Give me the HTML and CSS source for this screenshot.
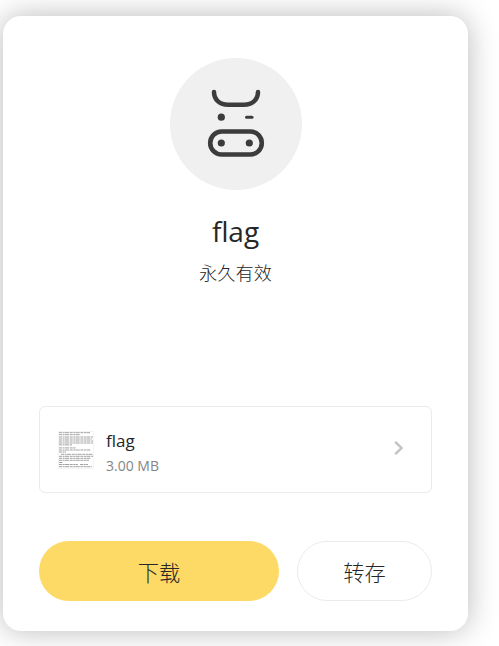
FILE: index.html
```html
<!DOCTYPE html>
<html lang="zh-CN">
<head>
<meta charset="utf-8">
<title>flag</title>
<link rel="stylesheet" href="styles.css">
</head>
<body>
<main class="card">
  <svg class="avatar" viewBox="0 0 132 132" fill="none" stroke="#3c3c3c" stroke-linecap="round">
    <circle cx="66" cy="66" r="66" fill="#f0f0f0" stroke="none"/>
    <path d="M44 34c0 8 6 12.7 14 12.7h16c8 0 14-4.700 14-12.700" stroke-width="4.500"/>
    <rect x="40.200" y="73.500" width="51.600" height="23" rx="11.500" stroke-width="4.600"/>
    <path d="M76.500 59.200h5.500" stroke-width="3"/>
    <g fill="#3c3c3c" stroke="none">
      <circle cx="51.300" cy="59.200" r="3.600"/>
      <circle cx="51.300" cy="85" r="3.600"/>
      <circle cx="79.300" cy="85" r="3.600"/>
    </g>
  </svg>
  <h1 class="title">flag</h1>
  <p class="validity">永久有效</p>
  <section class="file">
    <svg class="thumb" viewBox="0 0 36 38" fill="none" stroke="#8a8a8a" stroke-width=".8">
      <path stroke="#f1f1f1" d="M.5.500h35v37H.5z"/>
      <path stroke-dasharray="3 .6 2 .4 4 .7" d="M1 1.700h31M1 3.700h21M1 6h34M1 8h33M1 10h34M1 12h34M1 13.900h13M1 16.900h17M1 19h32M1 21h7M3 23.300h32M1 25.300h34M1 27.300h32M1 29.300h30M1 31.500h4M1 33.500h19M22 33.500h8M1 35.700h33"/>
    </svg>
    <div class="info">
      <div class="name">flag</div>
      <div class="size">3.00 MB</div>
    </div>
    <svg class="arrow" viewBox="0 0 10 16" fill="none" stroke="#c2c2c2" stroke-width="2.400"><path d="M1.200 1.800 7.500 8l-6.300 6.200"/></svg>
  </section>
  <div class="actions">
    <button class="btn primary">下载</button>
    <button class="btn secondary">转存</button>
  </div>
</main>
</body>
</html>
```
FILE: styles.css
```css
* { box-sizing: border-box; }
body {
  margin: 0;
  height: 646px;
  overflow: hidden;
  padding: 16.4px 0 0 3px;
  background: #fff;
  color: #262626;
  font-family: "Open Sans", "Noto Sans CJK SC", sans-serif;
}
.card {
  width: 465px;
  height: 615px;
  padding: 42px 36px 30px;
  border-radius: 18px;
  background: #fff;
  box-shadow: 0 0 30px rgba(0, 0, 0, .28);
  display: flex;
  flex-direction: column;
}
.avatar { width: 132px; height: 132px; margin-left: 131px; flex: none; }
.title {
  margin: 21px 0 0;
  font-size: 28px;
  line-height: 40px;
  font-weight: 400;
  text-align: center;
}
.validity {
  margin: 8.6px 0 0;
  font-size: 18.2px;
  line-height: 26px;
  font-weight: 300;
  text-align: center;
}
.file {
  margin-top: 120.4px;
  height: 87px;
  flex: none;
  border: 1px solid #ebebeb;
  border-radius: 6px;
  padding: 0 27px 0 18px;
  display: flex;
  align-items: center;
}
.thumb { width: 36px; height: 38px; flex: none; }
.info { margin: 8px 0 0 12px; flex: 1; }
.name { font-size: 17px; line-height: 24px; }
.size { font-size: 14px; line-height: 25px; color: #858585; }
.arrow { width: 10px; height: 16px; margin-top: -3px; }
.actions { margin-top: 48px; display: flex; gap: 18px; }
.btn {
  height: 60px;
  padding: 1px 0 0;
  border: 0;
  border-radius: 30px;
  background: #fff;
  color: #262626;
  font: 300 21.2px "Open Sans", "Noto Sans CJK SC", sans-serif;
}
.primary { width: 240px; background: #fdd966; }
.secondary { width: 135px; border: 1px solid #ebebeb; padding-bottom: 1px; }
```
